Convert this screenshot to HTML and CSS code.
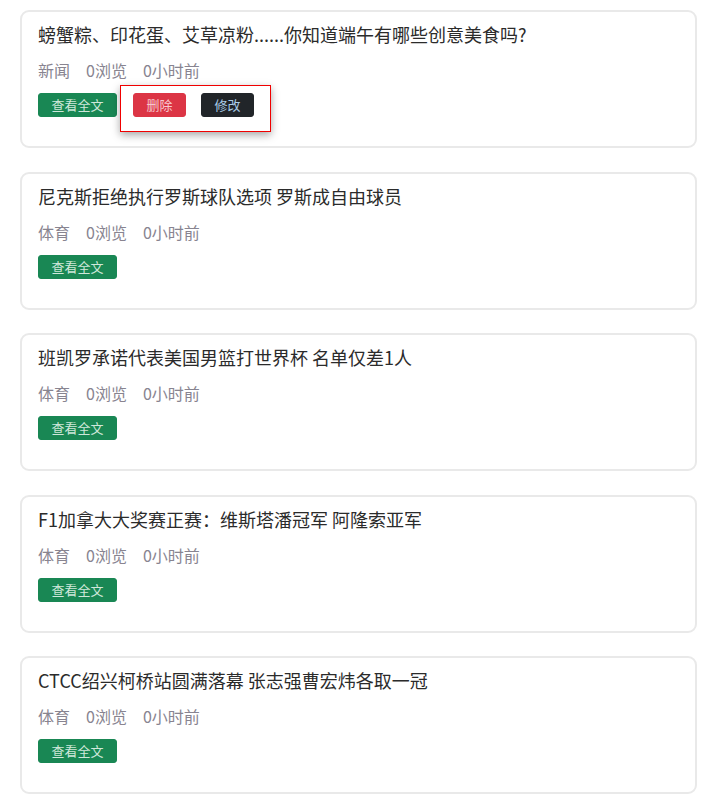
FILE: index.html
```html
<!DOCTYPE html>
<html lang="zh-CN">
<head>
<meta charset="utf-8">
<title>新闻列表</title>
<link rel="stylesheet" href="styles.css">
</head>
<body>
<div class="list">
  <div class="card">
    <div class="title">螃蟹粽、印花蛋、艾草凉粉......你知道端午有哪些创意美食吗?</div>
    <div class="meta"><span>新闻</span><span>0浏览</span><span>0小时前</span></div>
    <div class="actions">
      <button class="btn btn-green">查看全文</button>
      <div class="popover">
        <button class="btn btn-red">删除</button>
        <button class="btn btn-dark">修改</button>
      </div>
    </div>
  </div>
  <div class="card">
    <div class="title">尼克斯拒绝执行罗斯球队选项 罗斯成自由球员</div>
    <div class="meta"><span>体育</span><span>0浏览</span><span>0小时前</span></div>
    <div class="actions"><button class="btn btn-green">查看全文</button></div>
  </div>
  <div class="card">
    <div class="title">班凯罗承诺代表美国男篮打世界杯 名单仅差1人</div>
    <div class="meta"><span>体育</span><span>0浏览</span><span>0小时前</span></div>
    <div class="actions"><button class="btn btn-green">查看全文</button></div>
  </div>
  <div class="card">
    <div class="title">F1加拿大大奖赛正赛：维斯塔潘冠军 阿隆索亚军</div>
    <div class="meta"><span>体育</span><span>0浏览</span><span>0小时前</span></div>
    <div class="actions"><button class="btn btn-green">查看全文</button></div>
  </div>
  <div class="card">
    <div class="title">CTCC绍兴柯桥站圆满落幕 张志强曹宏炜各取一冠</div>
    <div class="meta"><span>体育</span><span>0浏览</span><span>0小时前</span></div>
    <div class="actions"><button class="btn btn-green">查看全文</button></div>
  </div>
</div>
</body>
</html>
```
FILE: styles.css
```css
* { box-sizing: border-box; }
html, body { margin: 0; background: #fff; }
body {
  font-family: "Noto Sans CJK SC", "Noto Sans", sans-serif;
  color: #212529;
}
.list {
  display: flex;
  flex-direction: column;
  gap: 23.5px;
  padding: 10px 24px 0 20px;
}
.card {
  height: 138px;
  border: 2px solid #e9e9e9;
  border-radius: 9px;
  padding: 9px 16px 0 16px;
}
.title {
  font-size: 18px;
  line-height: 27px;
  color: #2b2b2b;
}
.meta {
  margin-top: 10px;
  display: flex;
  gap: 16px;
  font-size: 16px;
  line-height: 24px;
  color: #888490;
}
.actions {
  position: relative;
  margin-top: 11px;
  display: flex;
}
.btn {
  font-family: inherit;
  font-size: 13px;
  line-height: 22px;
  height: 24px;
  padding: 0 12.5px;
  border: 1px solid transparent;
  border-radius: 3px;
  cursor: pointer;
}
.btn-green { background: #198754; border-color: #198754; color: #cfe7da; }
.btn-red { background: #dc3545; border-color: #dc3545; color: #f6c7cf; }
.btn-dark { background: #212529; border-color: #212529; color: #a9cde8; }
.popover {
  position: absolute;
  left: 82px;
  top: -8px;
  width: 151px;
  height: 47px;
  border: 1px solid #f00000;
  background: #fff;
  box-shadow: 0 3px 8px rgba(0, 0, 0, 0.35);
  display: flex;
  align-items: flex-start;
  gap: 15px;
  padding: 7px 0 0 12px;
}
```
